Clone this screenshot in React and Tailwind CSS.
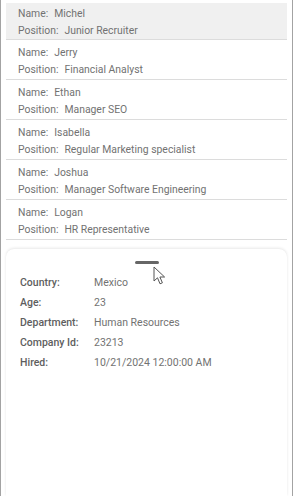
import React from 'react';

const people = [
  { name: 'Michel', position: 'Junior Recruiter' },
  { name: 'Jerry', position: 'Financial Analyst' },
  { name: 'Ethan', position: 'Manager SEO' },
  { name: 'Isabella', position: 'Regular Marketing specialist' },
  { name: 'Joshua', position: 'Manager Software Engineering' },
  { name: 'Logan', position: 'HR Representative' },
];

const details = [
  ['Country:', 'Mexico'],
  ['Age:', '23'],
  ['Department:', 'Human Resources'],
  ['Company Id:', '23213'],
  ['Hired:', '10/21/2024 12:00:00 AM'],
];

const Cursor = () => (
  <svg width="14" height="20" viewBox="0 0 14 20" className="absolute left-[152px] top-[266px]">
    <path d="M1 1 L1 15 L4.5 11.8 L7 17.8 L9.4 16.8 L6.9 11 L11.6 11 Z" fill="#fff" stroke="#555" strokeWidth="1" strokeLinejoin="round" />
  </svg>
);

export default function App() {
  return (
    <div
      className="relative w-[293px] h-[496px] overflow-hidden bg-white border-x border-[#a3a3a3] flex flex-col px-[5px]"
      style={{ fontFamily: 'Roboto, "Liberation Sans", sans-serif' }}
    >
      <ul>
        {people.map((p, i) => (
          <li
            key={p.name}
            className={
              i === 0
                ? 'mt-[3px] h-[37px] pt-[2px] pl-[12px] bg-[#f0f0f0] border-b border-[#dcdcdc] text-[10.4px] leading-[17px] text-[#727272]'
                : 'h-[40px] pt-[4px] pl-[12px] border-b border-[#dcdcdc] text-[10.4px] leading-[17px] text-[#727272]'
            }
          >
            <div>
              <span className="mr-[6px]">Name:</span>
              <span>{p.name}</span>
            </div>
            <div>
              <span className="mr-[6px]">Position:</span>
              <span>{p.position}</span>
            </div>
          </li>
        ))}
      </ul>

      <div className="mt-[9px] flex-1 rounded-t-[8px] bg-white shadow-[0_-1px_3px_rgba(0,0,0,0.09),0_0_1px_rgba(0,0,0,0.05)]">
        <div className="mx-auto mt-[12px] h-[3px] w-[24px] rounded-full bg-[#666]" />
        <div className="mt-[9px] px-[14px] grid grid-cols-[74px_1fr] text-[10.5px] leading-[20px]">
          {details.map(([k, v]) => (
            <React.Fragment key={k}>
              <div className="font-medium text-[#5e5e5e]">{k}</div>
              <div className="text-[#727272]">{v}</div>
            </React.Fragment>
          ))}
        </div>
      </div>

      <Cursor />
    </div>
  );
}
